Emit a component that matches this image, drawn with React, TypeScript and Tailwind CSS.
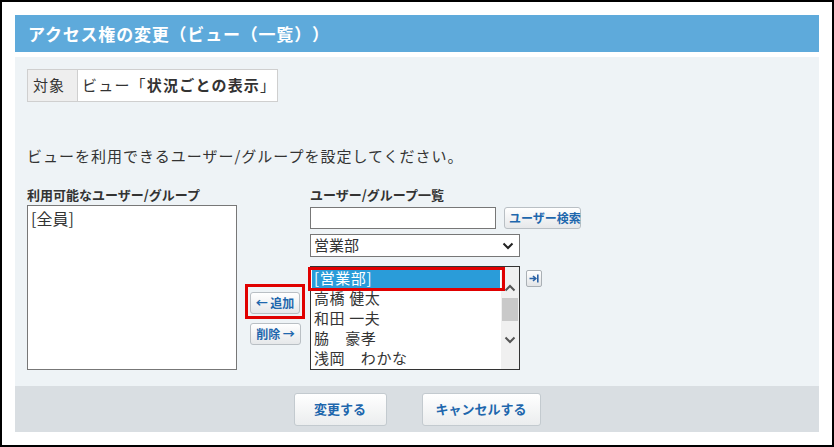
import React from "react";

const members = ["高橋 健太", "和田 一夫", "脇　豪孝", "浅岡　わかな"];

function SmallButton({ children, className = "" }: { children: React.ReactNode; className?: string }) {
  return (
    <button
      className={`h-[22px] whitespace-nowrap rounded-[3px] border border-[#b9bfc4] bg-gradient-to-b from-white to-[#e6e8ea] px-[4px] text-[12px] font-bold leading-none text-[#1e67ad] ${className}`}
    >
      {children}
    </button>
  );
}

function Chevron({ up }: { up?: boolean }) {
  return (
    <svg width="12" height="8" viewBox="0 0 12 8">
      <path
        d={up ? "M1.5 6.5 L6 2 L10.5 6.5" : "M1.5 1.5 L6 6 L10.5 1.5"}
        fill="none"
        stroke="#555"
        strokeWidth="2"
      />
    </svg>
  );
}

export default function App() {
  return (
    <div
      className="relative box-border h-[447px] w-[834px] border-2 border-black bg-white px-[13px] pt-[13px] text-[#333] [text-spacing-trim:space-all]"
      style={{ fontFamily: '"Noto Sans CJK JP", "Noto Sans", sans-serif' }}
    >
      {/* header */}
      <div className="flex h-[37px] items-center bg-[#5eaadb] pl-[13px] text-[17px] font-bold tracking-[0.8px] text-white">
        アクセス権の変更（ビュー（一覧））
      </div>

      {/* content */}
      <div className="mt-[5px] h-[329px] bg-[#eef3f6] px-[12px] pt-[12px]">
        <div className="flex h-[33px] w-[251px] border border-[#cfcfcf] text-[15px]">
          <div className="flex w-[50px] items-center border-r border-[#cfcfcf] bg-[#eeeeee] pl-[5px] tracking-[1px]">対象</div>
          <div className="flex flex-1 items-center bg-white pl-[4px] tracking-[1.2px]">
            ビュー「<span className="font-bold">状況ごとの表示</span>」
          </div>
        </div>

        <p className="mt-[44px] text-[15px] leading-[20px] tracking-[1px]">ビューを利用できるユーザー/グループを設定してください。</p>

        <div className="mt-[20px] flex">
          {/* available */}
          <div className="w-[210px]">
            <div className="text-[13px] font-bold leading-[18px]">利用可能なユーザー/グループ</div>
            <div className="mt-[1px] h-[165px] border border-[#777] bg-white px-[3px] pt-[2px] text-[16px] leading-[21px]">
              [全員]
            </div>
          </div>

          {/* add / remove */}
          <div className="ml-[8px] w-[59px] pt-[98px]">
            <div className="w-fit border-[3px] border-[#e00000] p-[2px]">
              <SmallButton className="w-[50px]">← 追加</SmallButton>
            </div>
            <SmallButton className="ml-[5px] mt-[4px] w-[51px]">削除 →</SmallButton>
          </div>

          {/* list */}
          <div className="ml-[6px]">
            <div className="text-[13px] font-bold leading-[18px]">ユーザー/グループ一覧</div>
            <div className="mt-[3px] flex items-center">
              <div className="h-[22px] w-[186px] border border-[#777] bg-white" />
              <SmallButton className="ml-[8px] w-[77px]">ユーザー検索</SmallButton>
            </div>
            <div className="mt-[5px] flex h-[23px] w-[210px] items-center justify-between border border-[#777] bg-white pl-[3px] pr-[5px] text-[15px]">
              <span>営業部</span>
              <svg width="12" height="8" viewBox="0 0 12 8">
                <path d="M1.5 1.5 L6 6 L10.5 1.5" fill="none" stroke="#222" strokeWidth="2" />
              </svg>
            </div>
            <div className="mt-[9px] flex items-start">
              <div className="flex h-[104px] w-[210px] overflow-hidden border border-[#333] bg-white">
                <div className="flex-1 pt-[1px] text-[15px] leading-[20px] tracking-[0.6px]">
                  <div className="mx-[1px] bg-[#2a9cd9] px-[2px] text-white">[営業部]</div>
                  {members.map((m) => (
                    <div key={m} className="whitespace-pre px-[3px]">
                      {m}
                    </div>
                  ))}
                </div>
                <div className="flex w-[18px] flex-col items-center bg-[#f0f0f0]">
                  <div className="mt-[17px]">
                    <Chevron up />
                  </div>
                  <div className="mt-[6px] h-[23px] w-[16px] bg-[#c9c9c9]" />
                  <div className="mt-[15px]">
                    <Chevron />
                  </div>
                </div>
              </div>
              <button className="ml-[6px] mt-[4px] flex h-[17px] w-[16px] items-center justify-center rounded-[2px] border border-[#aab0b5] bg-gradient-to-b from-white to-[#e2e4e6]">
                <svg width="10" height="9" viewBox="0 0 10 9">
                  <path d="M0.5 4.5 H6.5 M4 2 L6.8 4.5 L4 7" fill="none" stroke="#2a62a6" strokeWidth="1.6" />
                  <path d="M8.8 0.5 V8.5" stroke="#2a62a6" strokeWidth="1.6" />
                </svg>
              </button>
            </div>
          </div>
        </div>
      </div>

      {/* footer */}
      <div className="flex h-[46px] items-center justify-center gap-[35px] bg-[#d9dee2]">
        <button className="h-[33px] w-[93px] rounded-[3px] border border-[#c3cacf] bg-gradient-to-b from-white to-[#ebedee] text-[13px] font-bold text-[#1e67ad]">
          変更する
        </button>
        <button className="h-[33px] w-[119px] rounded-[3px] border border-[#c3cacf] bg-gradient-to-b from-white to-[#ebedee] text-[13px] font-bold text-[#1e67ad]">
          キャンセルする
        </button>
      </div>

      {/* annotation around selected item */}
      <div className="pointer-events-none absolute left-[306px] top-[265px] h-[24px] w-[197px] border-[3px] border-[#e00000]" />
    </div>
  );
}
